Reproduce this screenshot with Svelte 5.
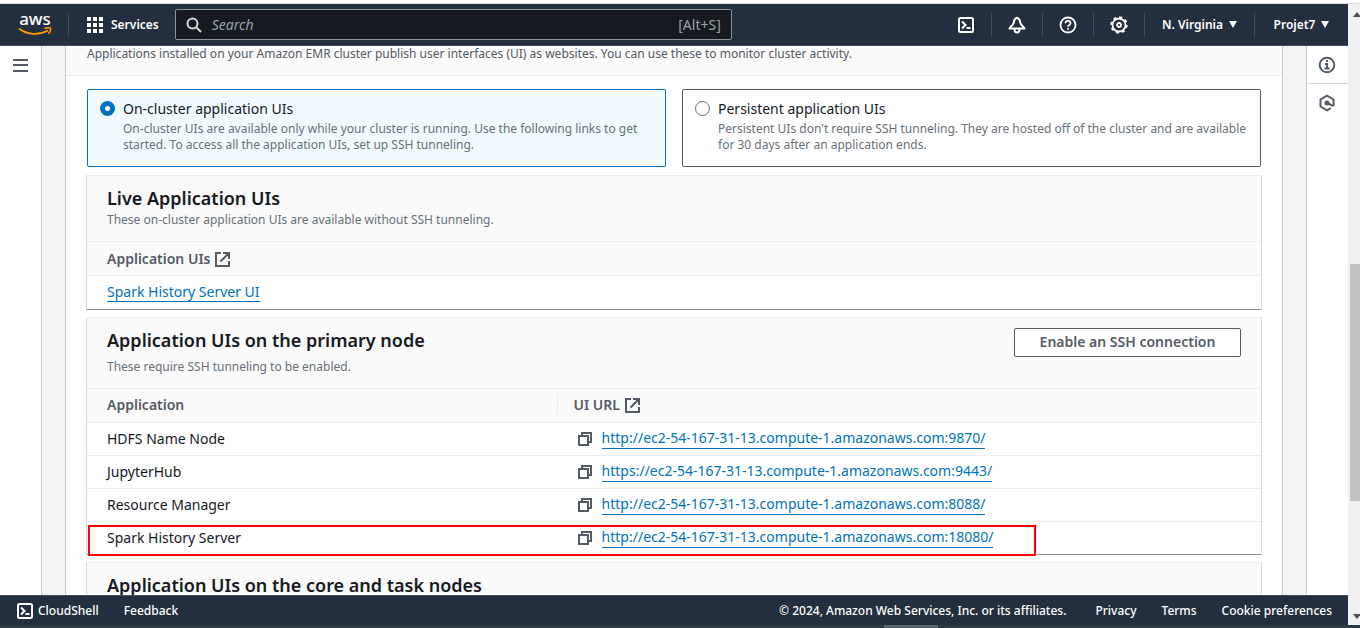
<script>
  let search = $state('');
  let mode = $state('cluster');

  const host = 'ec2-54-167-31-13.compute-1.amazonaws.com';
  const rows = [
    { name: 'HDFS Name Node', url: `http://${host}:9870/` },
    { name: 'JupyterHub', url: `https://${host}:9443/` },
    { name: 'Resource Manager', url: `http://${host}:8088/` },
    { name: 'Spark History Server', url: `http://${host}:18080/` }
  ];
  const dots = [0, 6, 12];
</script>

{#snippet shellIcon()}
  <svg class="ico18" viewBox="0 0 18 18" fill="none" stroke="currentColor" stroke-width="2" aria-hidden="true">
    <rect x="2" y="2" width="14" height="14" rx="1.5" />
    <path d="M5 5.5 8.5 9 5 12.5M9.5 12H13.5" />
  </svg>
{/snippet}

{#snippet externalIcon()}
  <svg class="ico16" viewBox="0 0 16 16" fill="none" stroke="currentColor" stroke-width="2" aria-hidden="true">
    <path d="M7 2H2V15H15V10M9 2H15V8M15 2 6.500 10.500" />
  </svg>
{/snippet}

{#snippet copyIcon()}
  <svg class="ico16" viewBox="0 0 16 16" fill="none" stroke="currentColor" stroke-width="2" aria-hidden="true">
    <path d="M2 5H11V14H2ZM5 5V2H14V11H11" />
  </svg>
{/snippet}

<div class="page">
  <div class="topline"></div>
  <div class="window">
    <div class="console">
      <header class="nav">
        <a class="logo" href="#home" aria-label="AWS home">
          <span class="word">aws</span>
          <svg viewBox="0 0 34 9" width="34" height="9" aria-hidden="true">
            <path d="M1 1.500C9 8 21 8.500 30 3.500" fill="none" stroke="#f90" stroke-width="1.800" />
            <path d="M26.500 1.500C29 .6 31.500 .5 32.500 1.200 33 2.600 32 5 30.500 6.800" fill="none" stroke="#f90" stroke-width="1.500" />
          </svg>
        </a>
        <button class="services">
          <svg width="16" height="16" viewBox="0 0 16 16" fill="currentColor" aria-hidden="true">
            {#each dots as y}
              {#each dots as x}
                <rect {x} {y} width="4" height="4" />
              {/each}
            {/each}
          </svg>
          Services
        </button>
        <label class="search">
          <svg width="16" height="16" viewBox="0 0 16 16" fill="none" stroke="#d5dbdb" stroke-width="2" aria-hidden="true">
            <circle cx="6.500" cy="6.500" r="5" />
            <path d="M10 10 15 15" />
          </svg>
          <input type="text" placeholder="Search" aria-label="Search" bind:value={search} />
          <span>[Alt+S]</span>
        </label>
        <div class="tools">
          <button class="tool" aria-label="CloudShell">{@render shellIcon()}</button>
          <button class="tool" aria-label="Notifications">
            <svg class="ico18" viewBox="0 0 18 18" fill="none" stroke="currentColor" stroke-width="2" stroke-linejoin="round" aria-hidden="true">
              <path d="M9 1.800C6.500 2.600 6 4.200 5.800 6.500 5.600 8.500 3.500 9.500 1.500 12.500H16.500C14.500 9.500 12.400 8.500 12.200 6.500 12 4.200 11.500 2.600 9 1.800Z" />
              <path d="M6.500 13C6.500 17.700 11.500 17.700 11.500 13" />
            </svg>
          </button>
          <button class="tool" aria-label="Help">
            <svg class="ico18" viewBox="0 0 18 18" fill="none" stroke="currentColor" stroke-width="1.800" aria-hidden="true">
              <circle cx="9" cy="9" r="7.500" />
              <path d="M6.500 7.200C6.500 4.200 11.500 4.200 11.500 7.200 11.500 9 9 8.800 9 10.800M9 12V13.800" />
            </svg>
          </button>
          <button class="tool" aria-label="Settings">
            <svg class="ico18" viewBox="0 0 18 18" fill="none" stroke="currentColor" aria-hidden="true">
              <circle cx="9" cy="9" r="6.500" stroke-width="1.800" />
              <circle cx="9" cy="9" r="7.800" stroke-width="1.800" stroke-dasharray="3 3.126" />
              <circle cx="9" cy="9" r="2" stroke-width="1.800" />
            </svg>
          </button>
          <button class="menu region">N. Virginia <i></i></button>
          <button class="menu">Projet7 <i></i></button>
        </div>
      </header>

      <div class="body">
        <aside class="left">
          <button aria-label="Open navigation">
            <svg width="16" height="13" viewBox="0 0 16 13" fill="currentColor" aria-hidden="true">
              <path d="M0 0H15V2H0ZM0 5H15V7H0ZM0 11H15V13H0Z" />
            </svg>
          </button>
        </aside>

        <main>
          <div class="panel">
            <p class="intro">
              Applications installed on your Amazon EMR cluster publish user interfaces (UI) as websites. You can use these to monitor cluster activity.
            </p>
            <div class="content">
              <div class="tiles">
                <label class="tile" class:on={mode === 'cluster'}>
                  <input type="radio" name="mode" value="cluster" bind:group={mode} />
                  <span class="tile-text">
                    <span class="tile-title">On-cluster application UIs</span>
                    <span class="hint">On-cluster UIs are available only while your cluster is running. Use the following links to get started. To access all the application UIs, set up SSH tunneling.</span>
                  </span>
                </label>
                <label class="tile" class:on={mode === 'persistent'}>
                  <input type="radio" name="mode" value="persistent" bind:group={mode} />
                  <span class="tile-text">
                    <span class="tile-title">Persistent application UIs</span>
                    <span class="hint">Persistent UIs don't require SSH tunneling. They are hosted off of the cluster and are available for 30 days after an application ends.</span>
                  </span>
                </label>
              </div>

              <section class="card">
                <div class="card-head">
                  <div>
                    <h2>Live Application UIs</h2>
                    <p class="hint">These on-cluster application UIs are available without SSH tunneling.</p>
                  </div>
                </div>
                <table>
                  <thead><tr><th><span class="cell">Application UIs {@render externalIcon()}</span></th></tr></thead>
                  <tbody><tr><td><a href="#spark">Spark History Server UI</a></td></tr></tbody>
                </table>
              </section>

              <section class="card">
                <div class="card-head tall">
                  <div>
                    <h2>Application UIs on the primary node</h2>
                    <p class="hint">These require SSH tunneling to be enabled.</p>
                  </div>
                  <button class="ssh">Enable an SSH connection</button>
                </div>
                <div class="marked">
                  <table class="two">
                    <thead>
                      <tr>
                        <th class="name">Application</th>
                        <th><span class="cell split">UI URL {@render externalIcon()}</span></th>
                      </tr>
                    </thead>
                    <tbody>
                      {#each rows as row}
                        <tr>
                          <td>{row.name}</td>
                          <td>
                            <span class="cell link">
                              <button class="copy" aria-label="Copy {row.name} URL">{@render copyIcon()}</button>
                              <a href={row.url}>{row.url}</a>
                            </span>
                          </td>
                        </tr>
                      {/each}
                    </tbody>
                  </table>
                </div>
              </section>

              <section class="card">
                <div class="card-head tall">
                  <div>
                    <h2>Application UIs on the core and task nodes</h2>
                  </div>
                </div>
              </section>
            </div>
          </div>
        </main>

        <aside class="right">
          <button aria-label="Info">
            <svg class="ico18" viewBox="0 0 18 18" fill="none" stroke="currentColor" stroke-width="2" aria-hidden="true">
              <circle cx="9" cy="9" r="7.300" />
              <path d="M9 4V6M7 8H9V12.500M6.500 12.500H11.500" />
            </svg>
          </button>
          <button aria-label="Diagnostics">
            <svg class="ico18" viewBox="0 0 18 18" fill="none" stroke="currentColor" stroke-width="2" aria-hidden="true">
              <path d="M13 14 9 16.300 2.500 12.500V5.500L9 1.700 15.500 5.500V12" />
              <circle cx="9" cy="9" r="1.500" fill="currentColor" />
              <path d="M9 9 15.500 12.200" />
            </svg>
          </button>
        </aside>
      </div>

      <footer>
        <button class="shell">{@render shellIcon()} CloudShell</button>
        <a href="#feedback">Feedback</a>
        <span class="copyright">© 2024, Amazon Web Services, Inc. or its affiliates.</span>
        <a href="#privacy">Privacy</a>
        <a href="#terms">Terms</a>
        <a href="#cookies">Cookie preferences</a>
      </footer>
    </div>

    <div class="scrollbar">
      <span class="up"></span>
      <span class="thumb"></span>
      <span class="down"></span>
    </div>
  </div>
  <div class="taskbar"><span></span></div>
</div>

<style>
  :global(body) {
    margin: 0;
    overflow: hidden;
  }
  .page {
    display: flex;
    flex-direction: column;
    height: 100vh;
    color: #16191f;
    background: #fff;
    font: 14px/20px 'Noto Sans', sans-serif;
  }
  .page * {
    box-sizing: border-box;
  }
  button {
    padding: 0;
    border: 0;
    background: none;
    color: inherit;
    font: inherit;
    cursor: pointer;
  }
  svg {
    display: block;
    flex: none;
  }
  p,
  h2 {
    margin: 0;
  }
  .ico16 {
    width: 16px;
    height: 16px;
  }
  .ico18 {
    width: 18px;
    height: 18px;
  }
  .topline {
    height: 4px;
    flex: none;
    border-bottom: 1px solid #dadce0;
  }
  .window {
    flex: 1;
    display: flex;
    min-height: 0;
  }
  .console {
    flex: 1;
    min-width: 0;
    display: flex;
    flex-direction: column;
  }

  .nav {
    flex: none;
    display: flex;
    align-items: center;
    height: 42px;
    color: #fff;
    background: #232f3e;
    border-bottom: 1px solid #414d5c;
    font-size: 12px;
    font-weight: 600;
  }
  .logo {
    display: flex;
    flex-direction: column;
    align-items: center;
    width: 69px;
    height: 24px;
    padding-left: 2px;
    color: #fff;
    text-decoration: none;
    border-right: 1px solid #414d5c;
  }
  .word {
    height: 14px;
    font-size: 17px;
    line-height: 12px;
    font-weight: 500;
  }
  .services {
    display: flex;
    align-items: center;
    gap: 8px;
    padding: 0 16px 0 18px;
  }
  .search {
    display: flex;
    align-items: center;
    gap: 10px;
    width: 557px;
    height: 31px;
    padding: 0 10px;
    border: 1px solid #879596;
    border-radius: 2px;
    background: #16191f;
    color: #95a5a6;
    font-size: 14px;
    font-weight: 400;
  }
  .search input {
    flex: 1;
    min-width: 0;
    padding: 0;
    border: 0;
    outline: 0;
    background: none;
    color: #fff;
    font: inherit;
  }
  .search input::placeholder {
    color: #95a5a6;
    font-style: italic;
    opacity: 1;
  }
  .tools {
    display: flex;
    margin-left: auto;
  }
  .tools button {
    display: flex;
    align-items: center;
    justify-content: center;
    height: 24px;
  }
  .tools .tool {
    width: 51px;
    border-right: 1px solid #414d5c;
  }
  .menu {
    gap: 6px;
    width: 93px;
  }
  .menu.region {
    width: 110px;
    border-right: 1px solid #414d5c;
  }
  .menu i {
    border: solid transparent;
    border-width: 7px 4px 0;
    border-top-color: #fff;
  }

  .body {
    flex: 1;
    display: flex;
    min-height: 0;
    overflow: hidden;
    background: #f2f3f3;
    color: #545b64;
  }
  .left {
    width: 42px;
    flex: none;
    padding: 13px 13px 0;
    background: #fff;
    border-right: 1px solid #c4cccc;
  }
  .left button {
    display: block;
  }
  .right {
    width: 42px;
    flex: none;
    background: #fff;
    border-left: 1px solid #c4cccc;
  }
  .right button {
    display: flex;
    align-items: center;
    justify-content: center;
    width: 100%;
    height: 38px;
    padding-right: 1px;
  }
  .right button:first-child {
    border-bottom: 1px solid #d5dbdb;
  }
  main {
    flex: 1;
    min-width: 0;
    padding: 0 23px;
  }
  .panel {
    min-height: 100%;
    background: #fff;
    border: solid #c4cccc;
    border-width: 0 1px;
  }
  .intro {
    height: 30px;
    padding: 0 21px;
    background: #fafafa;
    border-bottom: 1px solid #eaeded;
    font-size: 12px;
    line-height: 16px;
  }
  .content {
    padding: 13px 20px 0;
  }
  .tiles {
    display: grid;
    grid-template-columns: 1fr 1fr;
    gap: 16px;
    padding: 0 1px;
    margin-bottom: 8px;
  }
  .tile {
    display: flex;
    gap: 8px;
    min-height: 78px;
    padding: 9px 12px;
    border: 1px solid #545b64;
    border-radius: 2px;
    color: #16191f;
  }
  .tile.on {
    border-color: #0073bb;
    background: #f1faff;
  }
  .tile input {
    appearance: none;
    flex: none;
    width: 15px;
    height: 15px;
    margin: 2px 0 0;
    border: 1px solid #687078;
    border-radius: 50%;
    background: #fff;
  }
  .tile input:checked {
    border: 5px solid #0073bb;
  }
  .hint {
    display: block;
    margin-top: 2px;
    color: #687078;
    font-size: 12px;
    line-height: 16px;
  }
  .tile-title {
    display: block;
  }

  .card {
    margin-bottom: 7px;
    border: 1px solid #d5dbdb;
    border-top-color: #eaeded;
    border-bottom-color: #879596;
    background: #fff;
  }
  .card-head {
    display: flex;
    justify-content: space-between;
    align-items: flex-start;
    min-height: 65px;
    padding: 10px 20px;
    background: #fafafa;
  }
  .card-head.tall {
    min-height: 70px;
  }
  .tall .hint {
    margin-top: 7px;
  }
  h2 {
    color: #16191f;
    font-size: 18px;
    line-height: 24px;
    font-weight: 600;
  }
  .ssh {
    min-width: 227px;
    height: 29px;
    padding: 0 20px;
    border: 1px solid #545b64;
    border-radius: 2px;
    background: #fff;
    font-weight: 600;
  }
  table {
    width: 100%;
    border-collapse: collapse;
    table-layout: fixed;
  }
  th,
  td {
    height: 33px;
    padding: 0 20px;
    text-align: left;
    border-top: 1px solid #eaeded;
  }
  th {
    height: 34px;
    background: #fafafa;
    font-weight: 600;
  }
  td {
    color: #16191f;
  }
  .name {
    width: 40%;
  }
  .two th + th,
  .two td + td {
    padding-left: 0;
  }
  .cell {
    display: flex;
    align-items: center;
    gap: 4px;
  }
  .split {
    padding-left: 16px;
    border-left: 1px solid #eaeded;
  }
  .link {
    gap: 9px;
    padding-left: 20px;
  }
  .copy {
    color: #545b64;
  }
  td a {
    color: #0073bb;
    text-decoration: none;
    border-bottom: 1px solid #0073bb;
    line-height: 20px;
  }
  .marked {
    position: relative;
  }
  .marked::after {
    content: '';
    box-sizing: border-box;
    position: absolute;
    right: 225px;
    bottom: -2px;
    left: 1px;
    height: 31px;
    border: 2px solid #f00;
    pointer-events: none;
  }

  footer {
    flex: none;
    display: flex;
    align-items: center;
    gap: 25px;
    height: 30px;
    padding: 0 16px;
    color: #fff;
    background: #232f3e;
    border-top: 1px solid #414d5c;
    font-size: 12px;
    font-weight: 500;
  }
  footer a {
    color: inherit;
    text-decoration: none;
  }
  .shell {
    display: flex;
    align-items: center;
    gap: 4px;
  }
  .copyright {
    margin-left: auto;
    padding-right: 4px;
  }

  .scrollbar {
    flex: none;
    display: flex;
    flex-direction: column;
    width: 12px;
    padding: 8px 0 6px 2px;
    background: #f1f1f1;
    overflow: hidden;
  }
  .scrollbar .up,
  .scrollbar .down {
    width: 0;
    border: 4px solid transparent;
    margin-left: 3px;
  }
  .scrollbar .up {
    border-top: 0;
    border-bottom: 5px solid #505050;
    margin-bottom: auto;
  }
  .scrollbar .down {
    border-bottom: 0;
    border-top: 5px solid #505050;
  }
  .thumb {
    flex: 0 0 39%;
    margin-bottom: 113px;
    background: #c1c1c1;
  }
  .taskbar {
    flex: none;
    height: 3px;
    background: #2b3a42;
  }
  .taskbar span {
    display: block;
    width: 54px;
    height: 3px;
    margin-left: 65%;
    background: #56646c;
  }
</style>
